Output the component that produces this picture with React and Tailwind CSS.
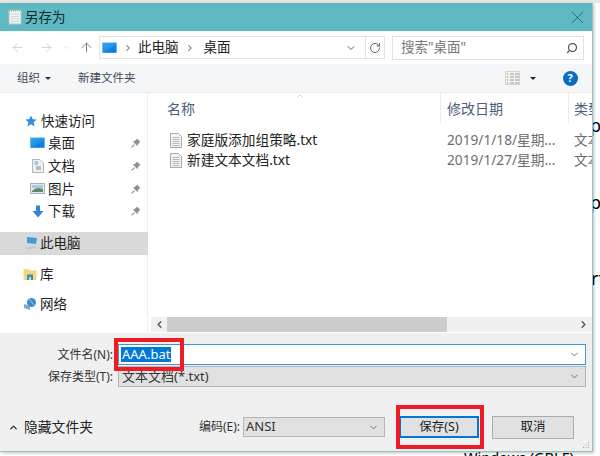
import { ArrowLeft, ArrowRight, ArrowUp, ChevronDown, ChevronRight, ChevronLeft, ChevronUp, RotateCw, Search, X } from 'lucide-react'

const font = { fontFamily: '"Noto Sans", "Noto Sans CJK SC", sans-serif' }

function Monitor({ className }) {
  return (
    <svg viewBox="0 0 16 12" className={className}>
      <defs>
        <linearGradient id="desk" x1="0" y1="0" x2="1" y2="1">
          <stop offset="0" stopColor="#33a5f5" />
          <stop offset="1" stopColor="#0f7fe0" />
        </linearGradient>
      </defs>
      <rect x="0.5" y="0.5" width="15" height="10.5" fill="url(#desk)" stroke="#5bb4ee" strokeWidth="0.6" />
      <path d="M1 11 L15 11 L15 3 Z" fill="#0c78d8" opacity="0.6" />
    </svg>
  )
}

function Pin() {
  return (
    <svg viewBox="0 0 10 10" className="w-[10px] h-[10px]">
      <path d="M6 0.5 L9.5 4 L8.4 4.6 L6.8 6.6 L6.6 8.2 L1.8 3.4 L3.4 3.2 L5.4 1.6 Z" fill="#8d9196" />
      <path d="M3.4 6.6 L0.6 9.4" stroke="#8d9196" strokeWidth="1.2" />
    </svg>
  )
}

function TxtIcon() {
  return (
    <svg viewBox="0 0 12 15" className="w-[12px] h-[15px] shrink-0">
      <path d="M0.5 0.5 H8.5 L11.5 3.5 V14.5 H0.5 Z" fill="#f4f4f4" stroke="#a9a9a9" />
      <path d="M2.5 4.5 H9.5 M2.5 6.5 H9.5 M2.5 8.5 H9.5 M2.5 10.5 H9.5 M2.5 12.5 H9.5" stroke="#b9b9b9" />
    </svg>
  )
}

function NavRow({ icon, label, pin }) {
  return (
    <div className="h-[22.7px] flex items-center pl-[30px] pr-[3px]">
      <span className="w-[15px] flex justify-center shrink-0">{icon}</span>
      <span className="ml-[3px] text-[13.5px] text-[#222]">{label}</span>
      {pin && <span className="ml-auto mr-[3px]"><Pin /></span>}
    </div>
  )
}

function Header({ label, className }) {
  return <div className={`h-[30px] flex items-center text-[14px] text-[#4c607a] shrink-0 ${className}`}>{label}</div>
}

function FileRow({ name, date }) {
  return (
    <div className="h-[20px] flex items-center text-[13.7px] whitespace-nowrap">
      <div className="w-[290px] pl-[20px] flex items-center gap-[5px] text-[#222] shrink-0">
        <TxtIcon />
        {name}
      </div>
      <div className="w-[127px] pl-[7px] text-[#6d6d6d] shrink-0">{date}</div>
      <div className="pl-[7px] text-[#6d6d6d]">文本</div>
    </div>
  )
}

export default function App() {
  return (
    <div style={font} className="relative w-[600px] h-[456px] overflow-hidden bg-white">
      {/* what is behind the dialog */}
      <span className="absolute left-[590px] top-[115px] text-[18px] leading-5 text-black">p</span>
      <span className="absolute left-[590px] top-[192px] text-[18px] leading-5 text-black">p</span>
      <span className="absolute left-[591px] top-[268px] text-[18px] leading-5 text-black">rt</span>
      <span className="absolute left-[464px] top-[447px] text-[14.5px] leading-5 text-black">Windows (GBLF)</span>
      <div className="absolute left-0 top-0 w-full h-[3px] bg-[#e6e6e6]" />

      {/* dialog */}
      <div className="relative mt-[3px] w-[593px] h-[449px] flex flex-col bg-white border-r border-b border-[#8cc6cb] shadow-[1px_1px_3px_rgba(0,0,0,0.25)]">
        <div className="h-[28px] bg-[#5fb9c2] flex items-center pl-[8px] pr-[4px] shrink-0">
          <svg viewBox="0 0 14 16" className="w-[14px] h-[16px]">
            <rect x="1" y="1" width="12" height="14" fill="#eef3f3" stroke="#b9c6c4" />
            <path d="M1 1.5 H13" stroke="#8fa3a8" strokeWidth="1.5" strokeDasharray="1 1" />
            <path d="M3 5 H11 M3 7.5 H11 M3 10 H11 M3 12.5 H11" stroke="#cfd8d8" />
          </svg>
          <span className="ml-[3px] text-[13.5px] text-[#12282b]">另存为</span>
          <X className="ml-auto text-[#22484c]" size={21} strokeWidth={0.8} />
        </div>

        <div className="h-[33px] flex items-center shrink-0 pl-[10px]">
          <ArrowLeft size={15} strokeWidth={1.5} className="text-[#d2d2d2]" />
          <ArrowRight size={15} strokeWidth={1.5} className="ml-[14px] text-[#d2d2d2]" />
          <ChevronDown size={9} strokeWidth={2} className="ml-[8px] text-[#d2d2d2]" />
          <ArrowUp size={15} strokeWidth={1.5} className="ml-[8px] text-[#777]" />
          <div className="ml-[5px] w-[286px] h-[23px] border border-[#e3e3e3] flex items-center">
            <Monitor className="ml-[2px] w-[15px] h-[12px]" />
            <ChevronRight size={10} strokeWidth={2.5} className="ml-[6px] text-[#666]" />
            <span className="ml-[5px] text-[13.5px] text-[#222]">此电脑</span>
            <ChevronRight size={10} strokeWidth={2.5} className="ml-[6px] text-[#666]" />
            <span className="ml-[9px] text-[13.5px] text-[#222]">桌面</span>
            <ChevronDown size={12} strokeWidth={2} className="ml-auto mr-[8px] text-[#666]" />
            <div className="h-full w-[19px] border-l border-[#e3e3e3] flex items-center justify-center">
              <RotateCw size={12} strokeWidth={2} className="text-[#666]" />
            </div>
          </div>
          <div className="ml-[7px] w-[192px] h-[24px] border border-[#e3e3e3] flex items-center pl-[8px] pr-[5px]">
            <span className="text-[13.5px] text-[#777]">搜索"桌面"</span>
            <Search size={12} strokeWidth={2.5} className="ml-auto -scale-x-100 text-[#555]" />
          </div>
        </div>

        <div className="h-[29px] bg-[#f5f6f7] border-b border-[#eaeaea] flex items-center shrink-0 text-[11.5px] text-[#3c4a5a]">
          <span className="ml-[17px]">组织</span>
          <span className="ml-[5px] w-0 h-0 border-x-[3px] border-x-transparent border-t-[3px] border-t-[#333]" />
          <span className="ml-[27px]">新建文件夹</span>
          <svg viewBox="0 0 15 14" className="ml-[369px] w-[15px] h-[14px]">
            <rect x="0.5" y="0.5" width="14" height="13" fill="#f3f3ee" stroke="#d5d5d0" />
            <path d="M2 3 H3 M2 6 H3 M2 9 H3 M2 12 H3" stroke="#b5763f" />
            <path d="M5 3 H9 M5 6 H9 M5 9 H9 M5 12 H9 M10 3 H14 M10 6 H14 M10 9 H14 M10 12 H14" stroke="#9a9a9a" />
          </svg>
          <span className="ml-[10px] w-0 h-0 border-x-[3px] border-x-transparent border-t-[3px] border-t-[#223]" />
          <span className="ml-[27px] w-[15px] h-[15px] rounded-full bg-[#0a6cc4] text-white text-[11px] font-bold flex items-center justify-center">?</span>
        </div>

        <div className="flex h-[240px] shrink-0">
          <div className="w-[148px] pt-[17px] shrink-0 border-r border-[#f0f0f0]">
            <div className="h-[22px] flex items-center pl-[25px]">
              <svg viewBox="0 0 12 12" className="w-[12px] h-[12px]">
                <path d="M6 0.5 L7.7 4.2 L11.6 4.6 L8.7 7.3 L9.5 11.4 L6 9.3 L2.5 11.4 L3.3 7.3 L0.4 4.6 L4.3 4.2 Z" fill="#2f8fe8" />
              </svg>
              <span className="ml-[4px] text-[13.5px] text-[#222]">快速访问</span>
            </div>
            <NavRow pin label="桌面" icon={<Monitor className="w-[15px] h-[12px]" />} />
            <NavRow pin label="文档" icon={
              <svg viewBox="0 0 12 14" className="w-[12px] h-[14px]">
                <path d="M0.5 0.5 H8 L11.5 4 V13.5 H0.5 Z" fill="#eef0f2" stroke="#b4b8bc" />
                <path d="M2.5 3 H6 M2.5 5 H6" stroke="#4d9fdc" />
                <path d="M4 8 H9 M4 10 H9" stroke="#7f8a94" />
              </svg>
            } />
            <NavRow pin label="图片" icon={
              <svg viewBox="0 0 15 11" className="w-[15px] h-[11px]">
                <rect x="0.5" y="0.5" width="14" height="10" fill="#dfe8ee" stroke="#a9b2b8" />
                <path d="M2 8 Q6 3 13 6 V9 H2 Z" fill="#5f8a72" />
                <rect x="2" y="2" width="11" height="3" fill="#a9c9e0" />
              </svg>
            } />
            <NavRow pin label="下载" icon={
              <svg viewBox="0 0 12 13" className="w-[12px] h-[13px]">
                <path d="M4 0.5 H8 V6 H11.5 L6 12.5 L0.5 6 H4 Z" fill="#2f86dc" />
              </svg>
            } />
            <div className="mt-[9px] h-[23px] bg-[#d9d9d9] flex items-center pl-[23px] -mr-px">
              <svg viewBox="0 0 16 14" className="w-[16px] h-[14px]">
                <path d="M4 1 L14 2 L13 8 L4 7 Z" fill="#3e9edb" />
                <path d="M1 12 L11 10 L15 11 L6 13.5 Z" fill="#c3c8cc" />
              </svg>
              <span className="ml-[1px] text-[13.5px] text-[#222]">此电脑</span>
            </div>
            <div className="mt-[8px] h-[23px] flex items-center pl-[23px]">
              <svg viewBox="0 0 14 14" className="w-[14px] h-[14px]">
                <path d="M0.5 2 H5 L6.5 3.5 H13.5 V13 H0.5 Z" fill="#f6d67c" />
                <rect x="4" y="7.5" width="6" height="5.5" fill="#2f8fd8" />
                <rect x="6" y="10" width="2" height="3" fill="#f6d67c" />
              </svg>
              <span className="ml-[3px] text-[13.5px] text-[#222]">库</span>
            </div>
            <div className="mt-[7px] h-[23px] flex items-center pl-[23px]">
              <svg viewBox="0 0 14 14" className="w-[14px] h-[14px]">
                <circle cx="8.5" cy="5.5" r="4.5" fill="#3c8dc9" />
                <path d="M1 7 L7 9 L7 13 L1 11 Z" fill="#7fa7bf" />
                <path d="M6 2 L11 8" stroke="#9cd0ee" />
              </svg>
              <span className="ml-[3px] text-[13.5px] text-[#222]">网络</span>
            </div>
          </div>

          <div className="relative flex-1 min-w-0 flex flex-col overflow-hidden">
            <div className="flex h-[30px] ml-[2px]">
              <Header label="名称" className="w-[291px] pl-[17px] border-r border-[#eaeaea]" />
              <Header label="修改日期" className="w-[128px] pl-[6px] border-r border-[#eaeaea]" />
              <Header label="类型" className="pl-[5px]" />
            </div>
            <ChevronUp size={10} strokeWidth={1} className="absolute left-[147px] top-[-2px] text-[#888]" />
            <div className="mt-[7px] ml-[2px] flex-1">
              <FileRow name="家庭版添加组策略.txt" date="2019/1/18/星期..." />
              <FileRow name="新建文本文档.txt" date="2019/1/27/星期..." />
            </div>
            <div className="h-[15px] mb-px ml-[3px] bg-[#f0f0f0] flex items-center text-[#555] shrink-0">
              <div className="w-[16px] flex justify-center"><ChevronLeft size={11} strokeWidth={3} /></div>
              <div className="w-[280px] h-full bg-[#cdcdcd]" />
              <div className="ml-auto w-[17px] flex justify-center"><ChevronRight size={11} strokeWidth={3} /></div>
            </div>
          </div>
        </div>

        <div className="flex-1 bg-[#f0f0f0] flex flex-col relative">
          <div className="mt-[11px] flex items-center h-[21px] pr-[6px]">
            <span className="w-[113px] text-right text-[12px] text-[#333]">文件名(N):</span>
            <div className="ml-[5px] flex-1 h-full border border-[#3a96dd] bg-white flex items-center pl-[2px] pr-[5px]">
              <span className="bg-[#0078d7] text-white text-[13px] leading-[15px] px-px">AAA.bat</span>
              <ChevronDown size={11} className="ml-auto text-[#666]" />
            </div>
          </div>
          <div className="mt-px flex items-center h-[21px] pr-[6px]">
            <span className="w-[113px] text-right text-[12px] text-[#333]">保存类型(T):</span>
            <div className="ml-[5px] flex-1 h-full border border-[#b5b5b5] bg-[#e1e1e1] flex items-center pl-[3px] pr-[5px]">
              <span className="text-[13px] text-[#333]">文本文档(*.txt)</span>
              <ChevronDown size={11} className="ml-auto text-[#666]" />
            </div>
          </div>
          <div className="mt-[29px] flex items-center h-[22px]">
            <ChevronUp size={11} strokeWidth={3} className="ml-[8px] text-[#333]" />
            <span className="ml-[5px] w-[175px] text-[13.8px] text-[#222]">隐藏文件夹</span>
            <span className="w-[40px] whitespace-nowrap text-[12px] text-[#333]">编码(E):</span>
            <div className="ml-[4px] w-[142px] h-[20px] border border-[#b5b5b5] bg-[#e1e1e1] flex items-center pl-[2px] pr-[5px]">
              <span className="text-[13px] text-[#333]">ANSI</span>
              <ChevronDown size={11} className="ml-auto text-[#666]" />
            </div>
            <div className="ml-[14px] w-[80px] h-[22px] border-2 border-[#0078d7] bg-[#e1e1e1] flex items-center justify-center text-[12.5px] text-[#222]">保存(S)</div>
            <div className="ml-[13px] w-[82px] h-[23px] border border-[#adadad] bg-[#e1e1e1] flex items-center justify-center text-[12.5px] text-[#222]">取消</div>
          </div>
          <svg viewBox="0 0 8 8" className="absolute right-[2px] bottom-[2px] w-[8px] h-[8px]">
            <path d="M6 1 h1 v1 h-1 Z M3.5 3.5 h1 v1 h-1 Z M6 3.5 h1 v1 h-1 Z M1 6 h1 v1 h-1 Z M3.5 6 h1 v1 h-1 Z M6 6 h1 v1 h-1 Z" fill="#a0a0a0" />
          </svg>
        </div>
      </div>

      {/* red annotation boxes */}
      <div className="absolute left-[114px] top-[338px] w-[70px] h-[33px] border-[4px] border-[#ee1c25]" />
      <div className="absolute left-[396px] top-[405px] w-[88px] h-[44px] border-[4px] border-[#ee1c25]" />
    </div>
  )
}
